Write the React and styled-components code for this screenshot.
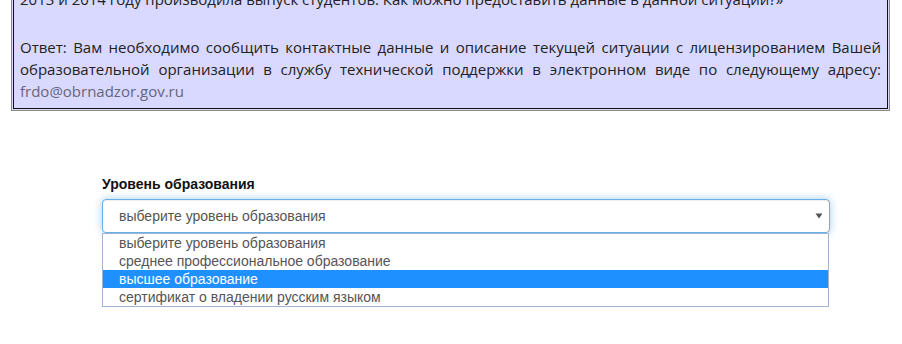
import React from 'react';
import styled, { createGlobalStyle } from 'styled-components';

const Global = createGlobalStyle`
  html, body { margin: 0; padding: 0; background: #fff; }
  body { width: 902px; height: 344px; overflow: hidden; }
`;

const Page = styled.div`
  padding: 0 12px 0 11px;
`;

const Notice = styled.div`
  margin-top: -21px;
  border: 1px solid #8a8a8a;
  padding: 1px;
  background: #d9d9ff;
`;

const NoticeInner = styled.div`
  border: 1px solid #111;
  padding: 6px 6px 6px;
  font-family: "Open Sans", "Noto Sans", sans-serif;
  font-size: 15px;
  line-height: 22px;
  color: #222;
  text-align: justify;
`;

const Para = styled.p`
  margin: 0 0 26px;
  &:last-child { margin: 0; }
`;

const Mail = styled.a`
  color: #66667a;
  text-decoration: none;
`;

const Form = styled.div`
  margin: 63px 0 0 91px;
  width: 728px;
`;

const Label = styled.label`
  display: block;
  font-family: "Liberation Sans", Arial, sans-serif;
  font-weight: 700;
  font-size: 14px;
  line-height: 20px;
  color: #111;
  margin-bottom: 5px;
`;

const SelectWrap = styled.div`
  position: relative;
`;

const SelectBox = styled.div`
  box-sizing: border-box;
  height: 34px;
  display: flex;
  align-items: center;
  justify-content: space-between;
  padding: 0 6px 0 16px;
  border: 1px solid #66afe9;
  border-radius: 4px;
  background: #fff;
  box-shadow: inset 0 1px 1px rgba(0, 0, 0, 0.075), 0 0 8px rgba(102, 175, 233, 0.6);
  font-family: "Liberation Sans", Arial, sans-serif;
  font-size: 14px;
  color: #555;
`;

const Options = styled.ul`
  position: absolute;
  top: 100%;
  left: 0;
  right: 1px;
  margin: 0;
  padding: 0;
  list-style: none;
  background: #fff;
  border: 1px solid #a3b3d3;
`;

const Option = styled.li`
  height: 18px;
  line-height: 18px;
  padding-left: 16px;
  font-family: "Liberation Sans", Arial, sans-serif;
  font-size: 14px;
  color: ${p => (p.$active ? '#fff' : '#555')};
  background: ${p => (p.$active ? '#1e90ff' : '#fff')};
  white-space: nowrap;
`;

const Arrow = () => (
  <svg width="8" height="6" viewBox="0 0 8 6" aria-hidden="true">
    <path d="M0.5 0.5 L7.5 0.5 L4 5.5 Z" fill="#555" />
  </svg>
);

const options = [
  'выберите уровень образования',
  'среднее профессиональное образование',
  'высшее образование',
  'сертификат о владении русским языком',
];

export default function App() {
  return (
    <>
      <Global />
      <Page>
        <Notice>
          <NoticeInner>
            <Para>2013 и 2014 году производила выпуск студентов. Как можно предоставить данные в данной ситуации?»</Para>
            <Para>
              Ответ: Вам необходимо сообщить контактные данные и описание текущей ситуации с лицензированием Вашей
              образовательной организации в службу технической поддержки в электронном виде по следующему адресу:{' '}
              <Mail href="mailto:frdo@obrnadzor.gov.ru">frdo@obrnadzor.gov.ru</Mail>
            </Para>
          </NoticeInner>
        </Notice>
        <Form>
          <Label>Уровень образования</Label>
          <SelectWrap>
            <SelectBox>
              <span>выберите уровень образования</span>
              <Arrow />
            </SelectBox>
            <Options>
              {options.map((o, i) => (
                <Option key={o} $active={i === 2}>{o}</Option>
              ))}
            </Options>
          </SelectWrap>
        </Form>
      </Page>
    </>
  );
}
